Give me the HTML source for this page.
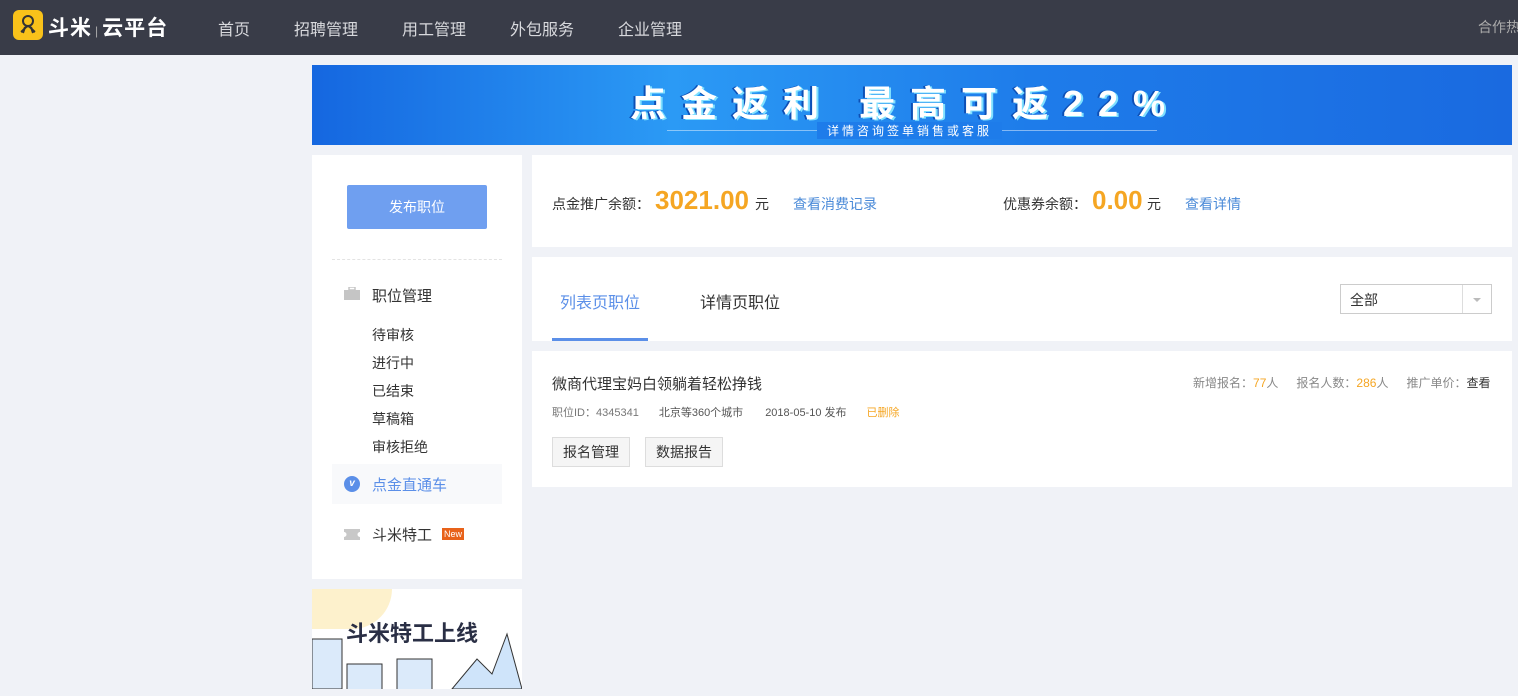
<!DOCTYPE html>
<html><head><meta charset="utf-8"><style>
*{margin:0;padding:0;box-sizing:border-box}
body{width:1518px;height:696px;overflow:hidden;background:#f0f2f7;font-family:"Liberation Sans","Noto Sans CJK SC",sans-serif;color:#333;position:relative}
.hd{position:absolute;left:0;top:0;width:1518px;height:55px;background:#393c48}
.logo{position:absolute;left:13px;top:10px;width:30px;height:30px;background:#f9c21a;border-radius:6px}
.lt{position:absolute;left:48px;top:12px;color:#fff;font-size:21px;font-weight:bold;letter-spacing:1px;white-space:nowrap}
.nav{position:absolute;top:16px;color:#d8d9dd;font-size:16px;white-space:nowrap}
.abs{position:absolute;white-space:nowrap}
.banner{left:312px;top:65px;width:1200px;height:80px;background:linear-gradient(90deg,#1567e0,#2b9af5 30%,#1e7cea 60%,#1a6ae0);overflow:hidden}
.side{left:312px;top:155px;width:210px;height:424px;background:#fff}
.btn{left:347px;top:185px;width:140px;height:44px;background:#6f9ff0;color:#fff;font-size:14px;text-align:center;line-height:44px;border-radius:2px}
.card{background:#fff}
.sub{font-size:15px;color:#333}
.num{font-family:"Liberation Sans",sans-serif;font-weight:bold;color:#f5a623;font-size:26px}
</style></head><body>
<div class="hd">
<div class="logo"><svg width="30" height="30" viewBox="0 0 30 30"><circle cx="15" cy="11" r="5" fill="none" stroke="#333" stroke-width="2"/><path d="M8 22c3-2 4-5 7-6 3 1 4 4 7 6M12 17l-2 6M18 17l2 6" fill="none" stroke="#333" stroke-width="2"/></svg></div>
<div class="lt">斗米<span style="font-weight:normal;font-size:12px;color:#aaa;margin:0 3px">|</span>云平台</div>
<div class="nav" style="left:218px">首页</div>
<div class="nav" style="left:294px">招聘管理</div>
<div class="nav" style="left:402px">用工管理</div>
<div class="nav" style="left:510px">外包服务</div>
<div class="nav" style="left:618px">企业管理</div>
<div class="nav" style="left:1478px;font-size:14px;top:17px;color:#aaa">合作热</div>
</div>
<div class="abs banner">
<div class="abs" style="left:355px;top:65px;width:490px;height:1px;background:rgba(255,255,255,.45)"></div>
<div class="abs" style="left:318px;top:10px;color:#fff;font-size:36px;font-weight:bold;letter-spacing:15px;text-shadow:2px 1px 0 #7fe0ff,-2px 0 0 #0d4fb5">点金返利 最高可返22%</div>
<div class="abs" style="left:505px;top:57px;color:#fff;font-size:12px;letter-spacing:3px;background:#1e7cea;padding:0 10px">详情咨询签单销售或客服</div>
</div>
<div class="abs side"></div>
<div class="abs btn">发布职位</div>
<div class="abs" style="left:332px;top:259px;width:170px;border-top:1px dashed #e3e3e3"></div>
<svg class="abs" style="left:344px;top:287px" width="16" height="13"><rect x="5" y="0" width="6" height="3" fill="none" stroke="#c5c5c5" stroke-width="1.5"/><rect x="0" y="3" width="16" height="10" fill="#c5c5c5"/></svg>
<div class="abs sub" style="left:372px;top:285px">职位管理</div>
<div class="abs" style="left:372px;top:321px;font-size:14px;line-height:28px">待审核<br>进行中<br>已结束<br>草稿箱<br>审核拒绝</div>
<div class="abs" style="left:332px;top:464px;width:170px;height:40px;background:#f8f9fb"></div>
<div class="abs" style="left:344px;top:476px;width:16px;height:16px;border-radius:50%;background:#5b8fe8;color:#fff;font-size:10px;font-weight:bold;text-align:center;line-height:16px;font-style:italic">v</div>
<div class="abs sub" style="left:372px;top:474px;color:#5b8fe8">点金直通车</div>
<svg class="abs" style="left:344px;top:529px" width="16" height="11"><path d="M0 0h16v3a2.5 2.5 0 0 0 0 5v3H0V8a2.5 2.5 0 0 0 0-5z" fill="#c8c8c8"/></svg>
<div class="abs sub" style="left:372px;top:524px">斗米特工</div>
<div class="abs" style="left:442px;top:528px;background:#e8621a;color:#fff;font-size:9px;padding:0 2px;line-height:12px">New</div>
<div class="abs" style="left:312px;top:589px;width:210px;height:100px;background:#fff;overflow:hidden">
<div class="abs" style="left:0;top:0;width:80px;height:40px;background:#fdf1cc;border-radius:0 0 40px 0"></div>
<div class="abs" style="left:34px;top:27px;font-size:22px;font-weight:bold;color:#2a2f45">斗米特工上线</div>
<svg class="abs" style="left:0;top:40px" width="210" height="60"><rect x="0" y="10" width="30" height="50" fill="#dbeafa" stroke="#333"/><rect x="35" y="35" width="35" height="30" fill="#dbeafa" stroke="#333"/><rect x="85" y="30" width="35" height="40" fill="#dbeafa" stroke="#333"/><path d="M140 60l25-30 15 15 15-40 15 55z" fill="#cfe4fa" stroke="#333"/></svg>
</div>
<div class="abs card" style="left:532px;top:155px;width:980px;height:92px"></div>
<div class="abs" style="left:552px;top:194px;font-size:14px">点金推广余额：</div>
<div class="abs num" style="left:655px;top:185px">3021.00</div>
<div class="abs" style="left:755px;top:194px;font-size:14px">元</div>
<div class="abs" style="left:793px;top:194px;font-size:14px;color:#4a8ad8">查看消费记录</div>
<div class="abs" style="left:1003px;top:194px;font-size:14px">优惠券余额：</div>
<div class="abs num" style="left:1092px;top:185px">0.00</div>
<div class="abs" style="left:1147px;top:194px;font-size:14px">元</div>
<div class="abs" style="left:1185px;top:194px;font-size:14px;color:#4a8ad8">查看详情</div>
<div class="abs card" style="left:532px;top:257px;width:980px;height:84px"></div>
<div class="abs" style="left:560px;top:289px;font-size:16px;color:#5b8fe8">列表页职位</div>
<div class="abs" style="left:552px;top:338px;width:96px;height:3px;background:#5b8fe8"></div>
<div class="abs" style="left:700px;top:289px;font-size:16px">详情页职位</div>
<div class="abs" style="left:1340px;top:284px;width:152px;height:30px;border:1px solid #ccc;background:#fff;font-size:14px;padding:5px 9px">全部<span class="abs" style="left:121px;top:0;height:28px;border-left:1px solid #ddd;width:30px"></span><span class="abs" style="left:132px;top:13px;border:4px solid transparent;border-top-color:#bbb"></span></div>
<div class="abs card" style="left:532px;top:351px;width:980px;height:136px"></div>
<div class="abs" style="left:552px;top:373px;font-size:15px">微商代理宝妈白领躺着轻松挣钱</div>
<div class="abs" style="left:552px;top:404px;font-size:11px;color:#777">职位ID：4345341<span style="margin-left:20px;color:#555">北京等360个城市</span><span style="margin-left:22px;color:#555">2018-05-10 发布</span><span style="margin-left:20px;color:#f5a623">已删除</span></div>
<div class="abs" style="left:1193px;top:374px;font-size:12px;color:#888">新增报名：<span style="color:#f5a623">77</span>人<span style="margin-left:18px">报名人数：<span style="color:#f5a623">286</span>人</span><span style="margin-left:18px">推广单价：<span style="color:#333">查看</span></span></div>
<div class="abs" style="left:552px;top:437px;width:78px;height:30px;border:1px solid #ddd;background:#f5f5f5;font-size:14px;text-align:center;line-height:28px">报名管理</div>
<div class="abs" style="left:645px;top:437px;width:78px;height:30px;border:1px solid #ddd;background:#f5f5f5;font-size:14px;text-align:center;line-height:28px">数据报告</div>
</body></html>
